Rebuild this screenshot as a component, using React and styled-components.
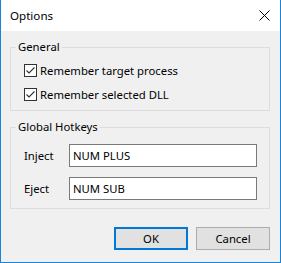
import React from "react";
import styled, { createGlobalStyle } from "styled-components";

const GlobalStyle = createGlobalStyle`
  html, body {
    margin: 0;
    padding: 0;
    background: #ffffff;
  }
  body {
    font-family: 'Noto Sans', 'Open Sans', sans-serif;
    font-size: 11.3px;
    color: #000;
  }
`;

const Window = styled.div`
  box-sizing: border-box;
  width: 281px;
  height: 263px;
  border: 1px solid #1883d7;
  border-top: none;
  display: flex;
  flex-direction: column;
  background: #f0f0f0;
`;

const TitleBar = styled.div`
  height: 31px;
  flex: none;
  background: #ffffff;
  display: flex;
  align-items: center;
  justify-content: space-between;
  padding: 0 10px 0 9px;
`;

const Title = styled.span`
  font-size: 11.6px;
  line-height: 16px;
`;

const CloseButton = styled.button`
  border: none;
  background: transparent;
  padding: 0;
  width: 11px;
  height: 11px;
  display: flex;
  cursor: pointer;
`;

const Content = styled.div`
  flex: 1;
  display: flex;
  flex-direction: column;
  padding: 8px 10px 0 9px;
`;

const Group = styled.fieldset`
  margin: 0 0 ${p => p.$gap || 0}px 0;
  padding: 0;
  min-width: 0;
  border: 1px solid #dcdcdc;
`;

const Legend = styled.legend`
  margin-left: 5px;
  padding: 0 2px;
  line-height: 16px;
`;

const GroupBody = styled.div`
  display: flex;
  flex-direction: column;
  gap: ${p => p.$gap || 0}px;
  padding: ${p => p.$pad};
`;

const CheckRow = styled.label`
  height: 24px;
  display: flex;
  align-items: center;
  gap: 3px;
`;

const Box = styled.span`
  box-sizing: border-box;
  width: 13px;
  height: 13px;
  border: 1px solid #333333;
  background: #ffffff;
  display: flex;
  align-items: center;
  justify-content: center;
`;

const FieldRow = styled.div`
  display: flex;
  align-items: center;
`;

const FieldLabel = styled.span`
  width: 45px;
`;

const TextInput = styled.input`
  box-sizing: border-box;
  width: 188px;
  height: 23px;
  border: 1px solid #7a7a7a;
  background: #ffffff;
  padding: 0 3px;
  font-family: inherit;
  font-size: 11.3px;
  color: #000;
  outline: none;
`;

const Buttons = styled.div`
  display: flex;
  justify-content: flex-end;
  gap: 8px;
  margin-top: 18px;
`;

const Button = styled.button`
  box-sizing: border-box;
  width: 74px;
  height: 23px;
  background: #e1e1e1;
  border: ${p => (p.$primary ? "2px solid #0078d7" : "1px solid #adadad")};
  font-family: inherit;
  font-size: 11.3px;
  color: #000;
  padding: 0;
`;

const Checkbox = ({ children }) => (
  <CheckRow>
    <Box>
      <svg width="11" height="11" viewBox="0 0 11 11">
        <path d="M1.5 5.5 L4 8 L9.5 2.5" fill="none" stroke="#333" strokeWidth="1.1" />
      </svg>
    </Box>
    <span>{children}</span>
  </CheckRow>
);

export default function App() {
  return (
    <>
      <GlobalStyle />
      <Window>
        <TitleBar>
          <Title>Options</Title>
          <CloseButton aria-label="Close">
            <svg width="11" height="11" viewBox="0 0 11 11">
              <path d="M0.5 0.5 L10.5 10.5 M10.5 0.5 L0.5 10.5" stroke="#000" strokeWidth="1" />
            </svg>
          </CloseButton>
        </TitleBar>
        <Content>
          <Group $gap={8}>
            <Legend>General</Legend>
            <GroupBody $pad="3px 13px 4px">
              <Checkbox>Remember target process</Checkbox>
              <Checkbox>Remember selected DLL</Checkbox>
            </GroupBody>
          </Group>
          <Group>
            <Legend>Global Hotkeys</Legend>
            <GroupBody $gap={10} $pad="9px 12px 8px 13px">
              <FieldRow>
                <FieldLabel>Inject</FieldLabel>
                <TextInput defaultValue="NUM PLUS" />
              </FieldRow>
              <FieldRow>
                <FieldLabel>Eject</FieldLabel>
                <TextInput defaultValue="NUM SUB" />
              </FieldRow>
            </GroupBody>
          </Group>
          <Buttons>
            <Button $primary>OK</Button>
            <Button>Cancel</Button>
          </Buttons>
        </Content>
      </Window>
    </>
  );
}
